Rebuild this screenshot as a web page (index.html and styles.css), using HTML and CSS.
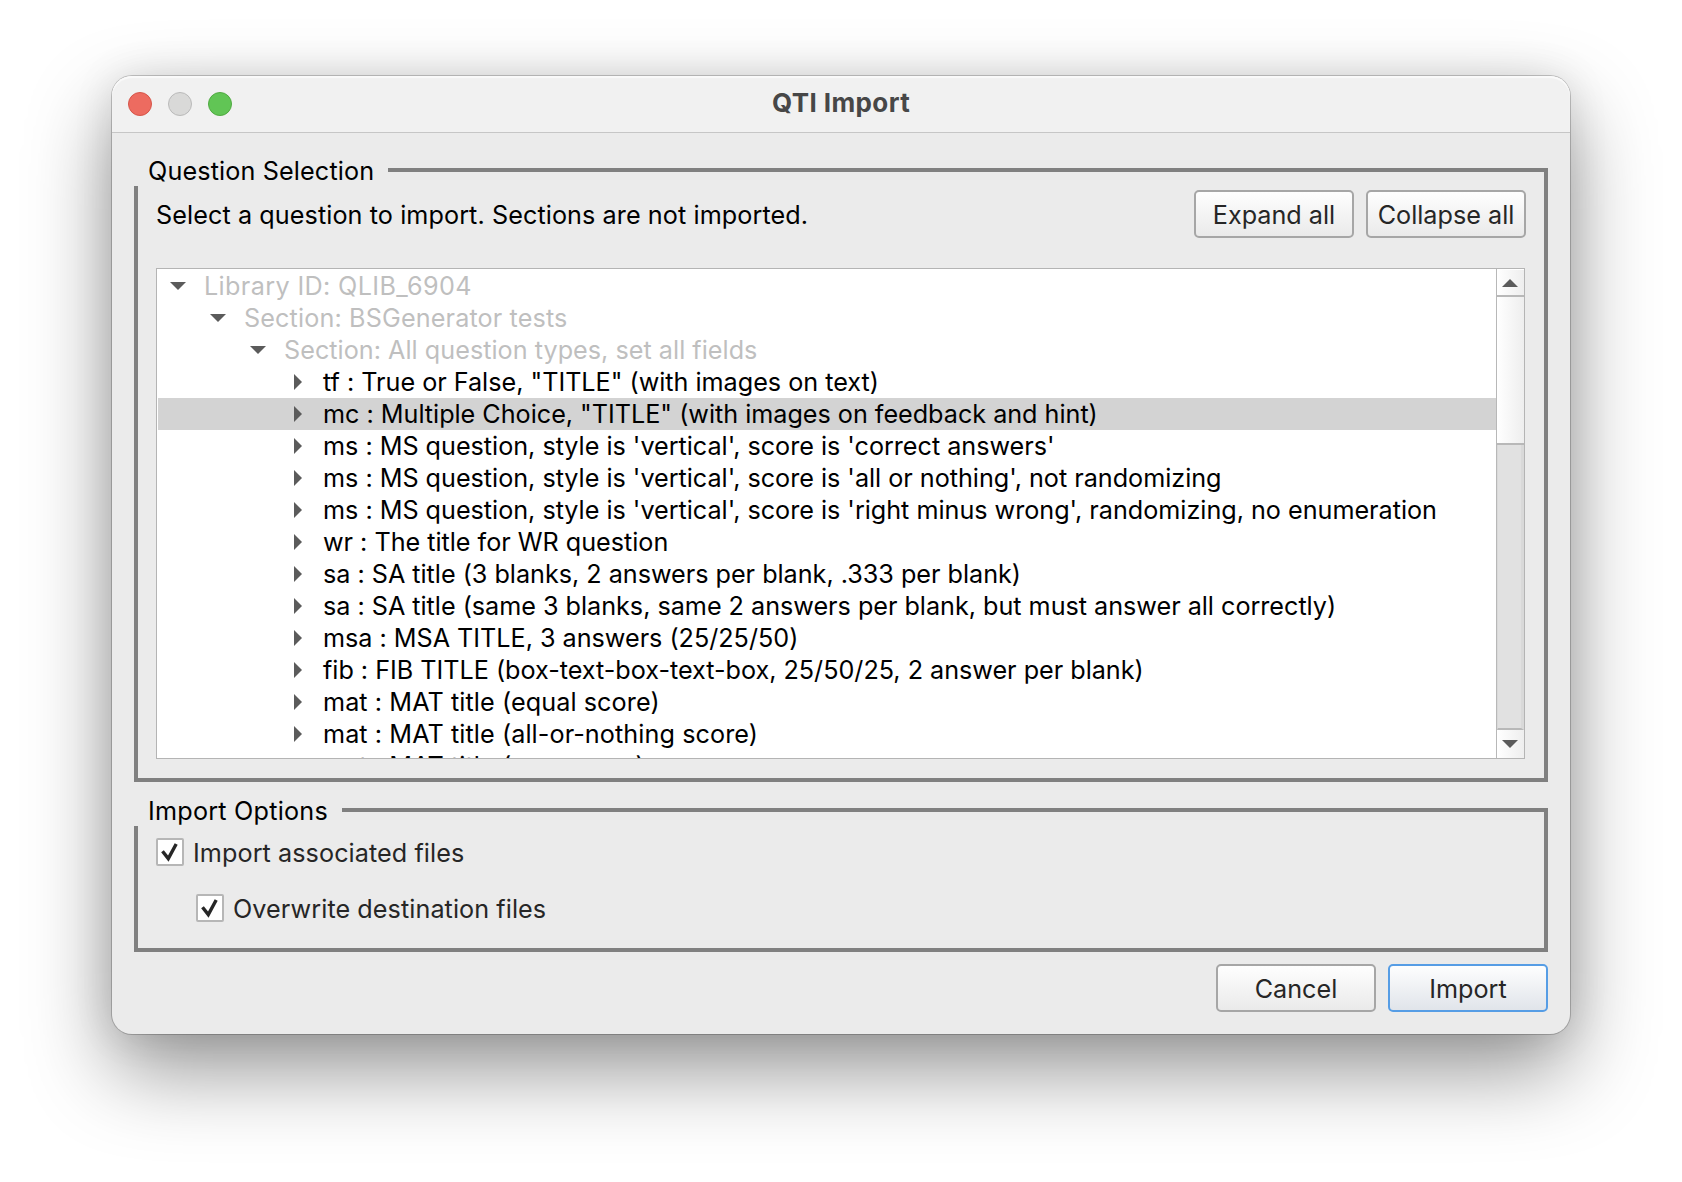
FILE: index.html
```html
<!DOCTYPE html>
<html lang="en">
<head>
<meta charset="utf-8">
<title>QTI Import</title>
<link rel="stylesheet" href="styles.css">
</head>
<body>
<main class="window">
  <header class="titlebar">
    <div class="lights"><i class="light close"></i><i class="light minimize"></i><i class="light zoom"></i></div>
    <h1 class="title">QTI Import</h1>
  </header>
  <div class="content">
    <section class="group selection">
      <div class="legend"><h2>Question Selection</h2><span class="rule"></span></div>
      <div class="panel">
        <div class="toolbar">
          <p>Select a question to import. Sections are not imported.</p>
          <button class="button">Expand all</button>
          <button class="button">Collapse all</button>
        </div>
        <div class="tree">
          <ul class="rows">
            <li class="row branch l0"><i class="down"></i><span>Library ID: QLIB_6904</span></li>
            <li class="row branch l1"><i class="down"></i><span>Section: BSGenerator tests</span></li>
            <li class="row branch l2"><i class="down"></i><span>Section: All question types, set all fields</span></li>
            <li class="row"><i class="right"></i><span>tf : True or False, "TITLE" (with images on text)</span></li>
            <li class="row selected"><i class="right"></i><span>mc : Multiple Choice, "TITLE" (with images on feedback and hint)</span></li>
            <li class="row"><i class="right"></i><span>ms : MS question, style is 'vertical', score is 'correct answers'</span></li>
            <li class="row"><i class="right"></i><span>ms : MS question, style is 'vertical', score is 'all or nothing', not randomizing</span></li>
            <li class="row"><i class="right"></i><span>ms : MS question, style is 'vertical', score is 'right minus wrong', randomizing, no enumeration</span></li>
            <li class="row"><i class="right"></i><span>wr : The title for WR question</span></li>
            <li class="row"><i class="right"></i><span>sa : SA title (3 blanks, 2 answers per blank, .333 per blank)</span></li>
            <li class="row"><i class="right"></i><span>sa : SA title (same 3 blanks, same 2 answers per blank, but must answer all correctly)</span></li>
            <li class="row"><i class="right"></i><span>msa : MSA TITLE, 3 answers (25/25/50)</span></li>
            <li class="row"><i class="right"></i><span>fib : FIB TITLE (box-text-box-text-box, 25/50/25, 2 answer per blank)</span></li>
            <li class="row mat"><i class="right"></i><span>mat : MAT title (equal score)</span></li>
            <li class="row mat"><i class="right"></i><span>mat : MAT title (all-or-nothing score)</span></li>
            <li class="row mat"><i class="blank"></i><span>mat : MAT title (sum score)</span></li>
          </ul>
          <div class="scrollbar">
            <div class="step up"><svg width="16" height="8" viewBox="0 0 16 8"><path d="M0 8 8 0l8 8z"/></svg></div>
            <div class="thumb"></div>
            <div class="trough"></div>
            <div class="step"><svg width="16" height="8" viewBox="0 0 16 8"><path d="M0 0h16L8 8z"/></svg></div>
          </div>
        </div>
      </div>
    </section>
    <section class="group options">
      <div class="legend"><h2>Import Options</h2><span class="rule"></span></div>
      <div class="panel checks">
        <div class="check"><span class="box"><svg width="24" height="24" viewBox="0 0 24 24"><path d="M4.5 11.2 10.3 18.6 18.2 4"/></svg></span><span>Import associated files</span></div>
        <div class="check nested"><span class="box"><svg width="24" height="24" viewBox="0 0 24 24"><path d="M4.5 11.2 10.3 18.6 18.2 4"/></svg></span><span>Overwrite destination files</span></div>
      </div>
    </section>
    <footer class="actions">
      <button class="button">Cancel</button>
      <button class="button primary">Import</button>
    </footer>
  </div>
</main>
</body>
</html>
```
FILE: styles.css
```css
* { box-sizing: border-box; }
body {
  margin: 0;
  height: 1182px;
  overflow: hidden;
  padding: 76px 112px 0;
  background: #fff;
  font: 25.2px/32px Inter, sans-serif;
  font-feature-settings: "calt" 0;
  color: #000;
}
h1, h2, p, ul { margin: 0; padding: 0; font-size: inherit; font-weight: 400; }
.window {
  width: 1458px;
  height: 958px;
  border-radius: 20px;
  background: #ebebeb;
  box-shadow: 0 0 0 1px rgba(0,0,0,.2), 0 36px 84px rgba(0,0,0,.42), 0 0 40px rgba(0,0,0,.1);
}
.titlebar {
  display: grid;
  grid-template-columns: 1fr auto 1fr;
  align-items: center;
  height: 57px;
  padding: 0 16px;
  border-bottom: 1px solid #c6c6c6;
  border-radius: 20px 20px 0 0;
  background: #f1f1f1;
  box-shadow: inset 0 2px 1px #fafafa;
}
.lights { display: flex; gap: 16px; }
.light { width: 24px; height: 24px; border-radius: 50%; border: 1px solid; }
.close { background: #ed6b60; border-color: #d65549; }
.minimize { background: #d9d9d8; border-color: #bababa; }
.zoom { background: #61c555; border-color: #50aa41; }
.title { padding-bottom: 2px; font-size: 26px; font-weight: 700; letter-spacing: .4px; color: #474747; }
.content { padding: 22px 22px 0; }
.group { display: flex; flex-direction: column; }
.selection { height: 627px; }
.options { height: 157px; margin-top: 13px; }
.legend { display: flex; height: 31px; padding-left: 14px; }
.legend h2 { width: 240px; letter-spacing: .13px; }
.options .legend h2 { width: 194px; letter-spacing: .22px; }
.rule { flex: 1; margin-top: 13px; border: solid #808080; border-width: 4px 4px 0 0; }
.panel {
  flex: 1;
  min-height: 0;
  padding: 4px 18px 0;
  border: 4px solid #808080;
  border-top: 0;
}
.toolbar { display: flex; align-items: flex-start; gap: 12px; height: 78px; }
.toolbar p { flex: 1; padding-top: 9px; letter-spacing: .08px; }
.button {
  width: 160px;
  height: 48px;
  padding: 2px 0 0;
  border: 2px solid #a6a6a6;
  border-radius: 5px;
  background: linear-gradient(#fff, #e9e9e9) border-box;
  color: #262626;
  font: inherit;
}
.primary { border-color: #569de5; background: linear-gradient(#fff, #dfe3e9) border-box; }
.tree {
  display: flex;
  height: 491px;
  width: 1369px;
  border: 1px solid #b4b4b4;
  background: #fff;
}
.rows { flex: 1; padding-top: 1px; overflow: hidden; list-style: none; white-space: nowrap; }
.row { display: flex; align-items: center; height: 32px; padding-left: 136px; margin-left: 1px; letter-spacing: -.02px; }
.row i { flex: none; width: 16px; height: 16px; margin-right: 13px; background: #5b5b5b; }
.row .down { clip-path: polygon(0 4px, 16px 4px, 8px 12px); }
.row .right { clip-path: polygon(0 0, 8px 8px, 0 16px); }
.row .blank { background: none; }
.mat { letter-spacing: .08px; }
.branch { color: #bfbfbf; }
.l0 { padding-left: 12px; letter-spacing: .36px; }
.l1 { padding-left: 52px; letter-spacing: .13px; }
.l2 { padding-left: 92px; letter-spacing: .02px; }
.row.branch i { margin-right: 18px; }
.selected { background: #d3d3d3; }
.scrollbar {
  display: flex;
  flex-direction: column;
  width: 28px;
  padding: 1px 0 0;
  border-left: 1px solid #b8b8b8;
}
.step { display: grid; place-items: center; height: 28px; padding-right: 2px; background: linear-gradient(90deg, #fff, #eee); }
.up { height: 27px; border-bottom: 2px solid #b8b8b8; }
.step svg { fill: #5b5b5b; }
.thumb { height: 148px; border-bottom: 2px solid #b8b8b8; background: linear-gradient(90deg, #fff, #eee); }
.trough { flex: 1; background: #e1e1e1; border: solid #d9d9d9; border-width: 0 3px 0 1px; border-bottom: 2px solid #b8b8b8; }
.checks { padding-top: 12px; }
.check { display: flex; align-items: center; gap: 9px; height: 28px; color: #262626; letter-spacing: .07px; }
.nested { margin: 28px 0 0 40px; }
.check span:last-child { padding-top: 2px; }
.box { display: flex; width: 28px; height: 28px; border: 2px solid #b6b6b6; border-radius: 2px; background: #fff; }
.box svg { fill: none; stroke: #262626; stroke-width: 3.4; }
.actions { display: flex; justify-content: flex-end; gap: 12px; padding-top: 12px; }
```
